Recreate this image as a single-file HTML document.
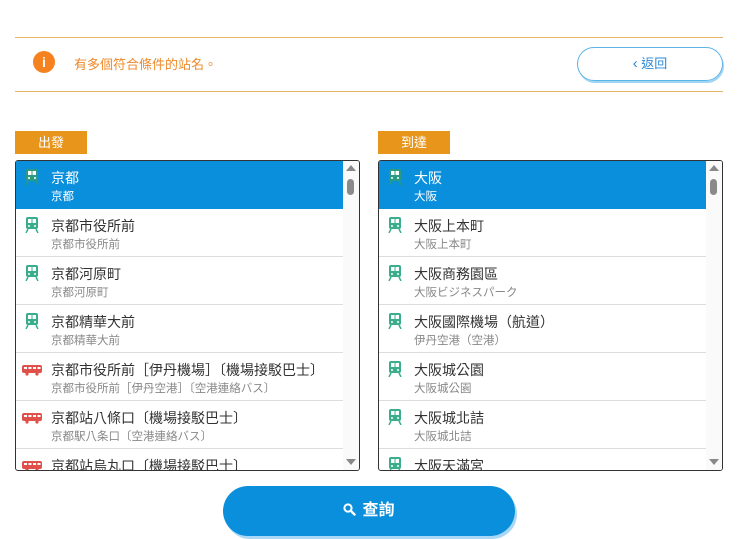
<!DOCTYPE html><html><head><meta charset="utf-8"><style>
*{margin:0;padding:0;box-sizing:border-box}
body{width:740px;height:539px;background:#fff;font-family:"Liberation Sans","Noto Sans CJK TC",sans-serif;position:relative;overflow:hidden}
.line{position:absolute;left:15px;width:708px;height:1px;background:#e6b56a}
.info{position:absolute;left:33px;top:51px;width:22px;height:22px;border-radius:50%;background:#f5821f;color:#fff;font-weight:bold;font-size:14px;text-align:center;line-height:22px}
.msg{position:absolute;left:74px;top:54px;font-size:13px;color:#ee8a2a}
.back{position:absolute;left:577px;top:47px;width:146px;height:34px;border:1px solid #5ab4e8;border-radius:17px;box-shadow:1px 2px 0 #9fd4f3;color:#2b8ad6;font-size:13px;text-align:center;line-height:32px}
.tag{position:absolute;top:131px;width:72px;height:23px;background:#e8951c;color:#fff;font-size:13px;text-align:center;line-height:23px}
.list{position:absolute;top:160px;width:345px;height:311px;border:1px solid #333;border-radius:3px;overflow:hidden;background:#fff}
.rows{position:absolute;left:0;top:0;right:16px}
.row{height:48px;border-bottom:1px solid #ddd;position:relative}
.row.sel{background:#0a8fdc;border-bottom:none;height:48px}
.row .t{position:absolute;left:35px;top:7px;font-size:14px;color:#333;white-space:nowrap}
.row .s{position:absolute;left:35px;top:27px;font-size:11.5px;color:#888;white-space:nowrap}
.row.sel .t,.row.sel .s{color:#fff}
.row svg{position:absolute;left:9px;top:8px}
.sb{position:absolute;right:0;top:0;width:16px;height:100%;background:#fafafa}
.sb .th{position:absolute;left:4px;top:18px;width:7px;height:16px;border-radius:4px;background:#8a8a8a}
.up{position:absolute;left:3px;top:4px;border:5px solid transparent;border-bottom:6px solid #888;border-top:none}
.dn{position:absolute;left:3px;bottom:5px;border:5px solid transparent;border-top:6px solid #888;border-bottom:none}
.search{position:absolute;left:223px;top:486px;width:292px;height:50px;border-radius:25px;background:#0a8fdc;box-shadow:2px 3px 0 #a8d8f5;color:#fff;font-size:16px;text-align:center;line-height:50px;font-weight:bold}
</style></head><body>
<div class="line" style="top:37px"></div>
<div class="line" style="top:91px"></div>
<div class="info">i</div>
<div class="msg">有多個符合條件的站名。</div>
<div class="back"><span style="font-size:15px">‹</span> 返回</div>
<div class="tag" style="left:15px">出發</div>
<div class="tag" style="left:378px">到達</div>

<svg width="0" height="0" style="position:absolute"><defs>
<symbol id="tr" viewBox="0 0 14 16"><rect x="1" y="0" width="12" height="12" rx="2" fill="currentColor"/><rect x="3" y="2" width="3.5" height="4" fill="#fff"/><rect x="7.5" y="2" width="3.5" height="4" fill="#fff"/><circle cx="4" cy="9" r="1" fill="#fff"/><circle cx="10" cy="9" r="1" fill="#fff"/><path d="M3 12 L1 16 M11 12 L13 16" stroke="currentColor" stroke-width="1.5"/></symbol>
<symbol id="bs" viewBox="0 0 20 12"><rect x="0" y="1" width="20" height="8" rx="2" fill="currentColor"/><rect x="2" y="3" width="3" height="2" fill="#fff"/><rect x="6.5" y="3" width="3" height="2" fill="#fff"/><rect x="11" y="3" width="3" height="2" fill="#fff"/><rect x="15.5" y="3" width="3" height="2" fill="#fff"/><circle cx="5" cy="10" r="1.6" fill="currentColor"/><circle cx="15" cy="10" r="1.6" fill="currentColor"/></symbol>
</defs></svg>

<div class="list" style="left:15px"><div class="rows">
<div class="row sel"><svg width="14" height="16" style="color:#2a9a82"><use href="#tr"/></svg><div class="t">京都</div><div class="s">京都</div></div>
<div class="row"><svg width="14" height="16" style="color:#3aae8c"><use href="#tr"/></svg><div class="t">京都市役所前</div><div class="s">京都市役所前</div></div>
<div class="row"><svg width="14" height="16" style="color:#3aae8c"><use href="#tr"/></svg><div class="t">京都河原町</div><div class="s">京都河原町</div></div>
<div class="row"><svg width="14" height="16" style="color:#3aae8c"><use href="#tr"/></svg><div class="t">京都精華大前</div><div class="s">京都精華大前</div></div>
<div class="row"><svg width="20" height="12" style="color:#e0504a;left:6px;top:11px"><use href="#bs"/></svg><div class="t">京都市役所前［伊丹機場］〔機場接駁巴士〕</div><div class="s">京都市役所前［伊丹空港］〔空港連絡バス〕</div></div>
<div class="row"><svg width="20" height="12" style="color:#e0504a;left:6px;top:11px"><use href="#bs"/></svg><div class="t">京都站八條口〔機場接駁巴士〕</div><div class="s">京都駅八条口〔空港連絡バス〕</div></div>
<div class="row"><svg width="20" height="12" style="color:#e0504a;left:6px;top:11px"><use href="#bs"/></svg><div class="t">京都站烏丸口〔機場接駁巴士〕</div><div class="s">京都駅烏丸口〔空港連絡バス〕</div></div>
</div><div class="sb"><div class="up"></div><div class="th"></div><div class="dn"></div></div></div>

<div class="list" style="left:378px"><div class="rows">
<div class="row sel"><svg width="14" height="16" style="color:#2a9a82"><use href="#tr"/></svg><div class="t">大阪</div><div class="s">大阪</div></div>
<div class="row"><svg width="14" height="16" style="color:#3aae8c"><use href="#tr"/></svg><div class="t">大阪上本町</div><div class="s">大阪上本町</div></div>
<div class="row"><svg width="14" height="16" style="color:#3aae8c"><use href="#tr"/></svg><div class="t">大阪商務園區</div><div class="s">大阪ビジネスパーク</div></div>
<div class="row"><svg width="14" height="16" style="color:#3aae8c"><use href="#tr"/></svg><div class="t">大阪國際機場（航道）</div><div class="s">伊丹空港（空港）</div></div>
<div class="row"><svg width="14" height="16" style="color:#3aae8c"><use href="#tr"/></svg><div class="t">大阪城公園</div><div class="s">大阪城公園</div></div>
<div class="row"><svg width="14" height="16" style="color:#3aae8c"><use href="#tr"/></svg><div class="t">大阪城北詰</div><div class="s">大阪城北詰</div></div>
<div class="row"><svg width="14" height="16" style="color:#3aae8c"><use href="#tr"/></svg><div class="t">大阪天滿宮</div><div class="s">大阪天満宮</div></div>
</div><div class="sb"><div class="up"></div><div class="th"></div><div class="dn"></div></div></div>

<div class="search"><svg width="13" height="13" viewBox="0 0 13 13" style="vertical-align:-1px;margin-right:6px"><circle cx="5" cy="5" r="3.6" fill="none" stroke="#fff" stroke-width="2"/><path d="M7.8 7.8 L11.5 11.5" stroke="#fff" stroke-width="2.4" stroke-linecap="round"/></svg>查詢</div>
</body></html>
